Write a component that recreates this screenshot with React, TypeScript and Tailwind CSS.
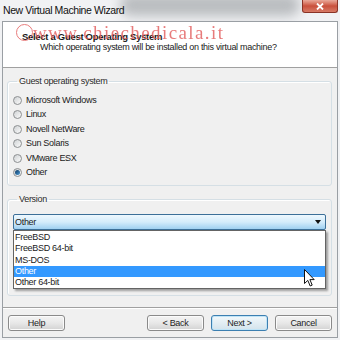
import React from "react";

const osList = ["Microsoft Windows", "Linux", "Novell NetWare", "Sun Solaris", "VMware ESX", "Other"];
const versions = ["FreeBSD", "FreeBSD 64-bit", "MS-DOS", "Other", "Other 64-bit"];

function Radio({ checked }: { checked?: boolean }) {
  return (
    <span className="flex h-[9px] w-[9px] items-center justify-center rounded-full border border-[#8c8f91] bg-gradient-to-br from-[#cfd2d4] to-[#fbfbfb]">
      {checked && <span className="h-[5px] w-[5px] rounded-full bg-gradient-to-br from-[#0d3a63] to-[#4a9ad6]" />}
    </span>
  );
}

function Button({ label, primary }: { label: string; primary?: boolean }) {
  return (
    <button
      className={
        primary
          ? "h-[16px] w-[57px] rounded-[3px] border border-[#3c7fb1] bg-gradient-to-b from-[#f2f8fb] to-[#d3e3ec] text-[9px] leading-none tracking-[-0.3px] text-[#1e1e1e] shadow-[inset_0_0_0_1px_#bfe4f7]"
          : "h-[16px] w-[57px] rounded-[3px] border border-[#8a8a8a] bg-gradient-to-b from-[#f4f4f4] via-[#e8e8e8] to-[#d2d2d2] text-[9px] leading-none tracking-[-0.3px] text-[#1e1e1e] shadow-[inset_0_0_0_1px_#fbfbfb]"
      }
    >
      {label}
    </button>
  );
}

export default function App() {
  return (
    <div className="relative flex h-[340px] w-[340px] flex-col overflow-hidden bg-[#f1f2f4] px-[2px] font-['Liberation_Sans',Arial,sans-serif] text-[#1a1a1a]">
      {/* aero glass smudge */}
      <div className="absolute left-[120px] top-[-6px] h-[22px] w-[180px] rounded-full bg-[#b9bcbf] blur-[6px]" />

      <div className="relative flex h-[21px] items-start">
        <span className="pl-[1px] pt-[4px] text-[10.5px] leading-[12px] tracking-[-0.4px] text-[#111]">New Virtual Machine Wizard</span>
        <div className="ml-auto flex h-[13px] w-[36px] items-center justify-center rounded-b-[3px] border border-t-0 border-[#8a3326] bg-gradient-to-b from-[#e9a99a] via-[#c9503c] to-[#d77a66]">
          <svg width="8" height="7" viewBox="0 0 8 7">
            <path d="M1 0.5 L7 6.5 M7 0.5 L1 6.5" stroke="#fff" strokeWidth="1.8" />
          </svg>
        </div>
      </div>

      <div className="relative flex h-[317px] flex-col border border-[#9a9fa4] bg-[#f0f0f0]">
        <div className="h-[46px] border-b border-[#a0a0a0] bg-white pl-[19px] pt-[9px]">
          <div className="text-[9.5px] font-bold leading-[11px] tracking-[-0.3px]">Select a Guest Operating System</div>
          <div className="pl-[18px] text-[9px] leading-[11px] tracking-[-0.3px]">
            Which operating system will be installed on this virtual machine?
          </div>
        </div>

        <div className="pl-[4px] pr-[5px]">
          <fieldset className="mt-[7px] rounded-[3px] border border-[#d5dfe5] pb-[5px] pl-[5px] shadow-[inset_1px_1px_0_#fff]">
            <legend className="ml-[4px] px-[2px] text-[9px] leading-[12px] tracking-[-0.3px] text-[#2a2a2a]">Guest operating system</legend>
            <div className="pt-[6px]">
              {osList.map((os) => (
                <div key={os} className="flex h-[14.5px] items-center gap-[4px]">
                  <Radio checked={os === "Other"} />
                  <span className="text-[9px] leading-none tracking-[-0.3px]">{os}</span>
                </div>
              ))}
            </div>
          </fieldset>

          <fieldset className="mt-[7px] rounded-[3px] border border-[#d5dfe5] px-[5px] pb-[65px] shadow-[inset_1px_1px_0_#fff]">
            <legend className="ml-[4px] px-[2px] text-[9px] leading-[12px] tracking-[-0.3px] text-[#2a2a2a]">Version</legend>
            <div className="relative mt-[9px]">
              <div className="flex h-[16px] items-center rounded-[2px] border border-[#3c6f98] bg-gradient-to-b from-[#eef8fe] via-[#d4ecfb] to-[#9fd0f1] pl-[1px] pr-[4px]">
                <span className="text-[9px] leading-none tracking-[-0.3px]">Other</span>
                <svg className="ml-auto" width="6" height="4" viewBox="0 0 6 4">
                  <path d="M0 0 H6 L3 4 Z" fill="#111" />
                </svg>
              </div>
              <div className="absolute left-0 right-0 top-full z-10 border border-[#646464] bg-white pt-[1px] shadow-[2px_2px_2px_rgba(0,0,0,0.35)]">
                {versions.map((v) => (
                  <div
                    key={v}
                    className={
                      v === "Other"
                        ? "h-[11.3px] bg-[#3399ff] pl-[1px] text-[9px] leading-[11.3px] tracking-[-0.3px] text-white"
                        : "h-[11.3px] pl-[1px] text-[9px] leading-[11.3px] tracking-[-0.3px]"
                    }
                  >
                    {v}
                  </div>
                ))}
              </div>
            </div>
          </fieldset>
        </div>

        <div className="mt-auto flex items-start border-t border-[#a0a0a0] px-[5px] pb-[6px] pt-[7px] shadow-[inset_0_1px_0_#fff]">
          <Button label="Help" />
          <div className="ml-auto flex gap-[7px]">
            <Button label="< Back" />
            <Button label="Next >" primary />
            <Button label="Cancel" />
          </div>
        </div>
      </div>

      {/* mouse pointer */}
      <svg className="absolute left-[304px] top-[269px] z-20" width="11" height="18" viewBox="0 0 11 18">
        <path d="M0.5 0.5 L0.5 14.5 L3.8 11.4 L6.2 17 L8.2 16.1 L5.9 10.6 L10.2 10.6 Z" fill="#fff" stroke="#111" strokeWidth="1" strokeLinejoin="round" />
      </svg>

      {/* watermark */}
      <div className="pointer-events-none absolute left-[16px] top-[24px] z-30 h-[18px] whitespace-nowrap opacity-80">
        <span className="absolute left-0 top-0 h-[17px] w-[17px] rounded-full border border-[#e25b5b]" />
        <span className="block pl-[17px] font-['Liberation_Serif',serif] text-[19px] leading-[17px] tracking-[1.4px] text-[#e25b5b]">
          www.chiechedicala.it
        </span>
      </div>
    </div>
  );
}
